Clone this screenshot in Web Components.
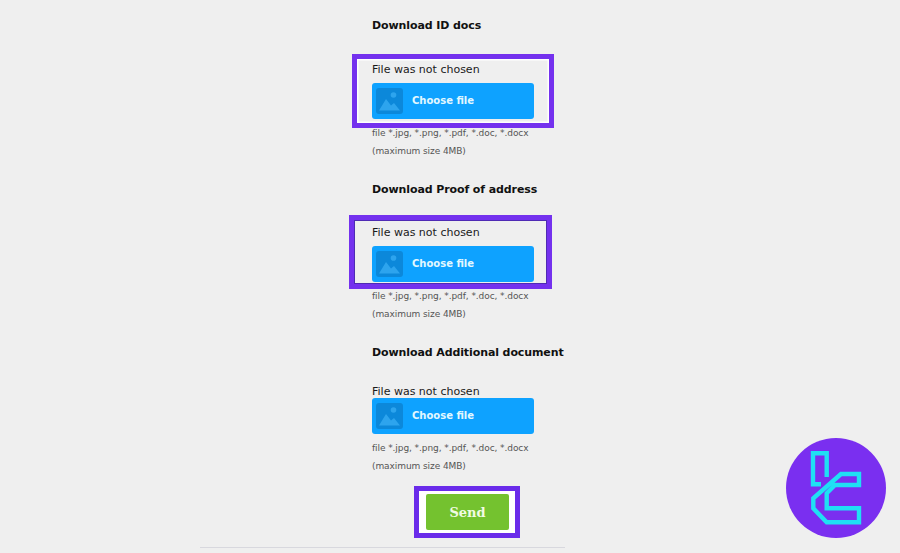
<!DOCTYPE html>
<html>
<head>
<meta charset="utf-8">
<style>
  html, body { margin: 0; height: 100%; background: #efefef; overflow: hidden; }
  body { font-family: "DejaVu Sans", sans-serif; color: #111; }
  #page { box-sizing: border-box; width: 365px; margin-left: 200px; padding: 16px 0 0 172px; }
</style>
</head>
<body>
<div id="page">
  <upload-block heading="Download ID docs" mark="first"></upload-block>
  <upload-block heading="Download Proof of address" mark="second"></upload-block>
  <upload-block heading="Download Additional document" tight></upload-block>
  <send-button>Send</send-button>
</div>
<page-rule></page-rule>
<brand-badge></brand-badge>

<script>
class ChooseFile extends HTMLElement {
  constructor () {
    super();
    this.attachShadow({ mode: 'open' });
    this.shadowRoot.innerHTML = /* html */ `
    <style>
      :host { display: flex; align-items: center; box-sizing: border-box; width: 162px; height: 36px; padding-left: 4px; background: #0ea2ff; border-radius: 3px; }
      .tile { display: block; width: 27px; height: 26px; }
      span { margin: 0 0 2px 9px; font: bold 10px "DejaVu Sans", sans-serif; color: #e2f8ff; }
    </style>
    <svg class="tile" viewBox="0 0 27 26">
      <rect width="27" height="26" rx="3" fill="#0c88da"/>
      <circle cx="17.5" cy="7" r="2.8" fill="#2da4ee"/>
      <path d="M3 22.5 L10 11 L15 17.5 L18 15 L24 22.5 Z" fill="#2da4ee"/>
    </svg>
    <span>Choose file</span>`;
  }
}

class UploadBlock extends HTMLElement {
  constructor () {
    super();
    this.attachShadow({ mode: 'open' });
  }

  static get styles () {
    return /* css */ `
      :host { display: block; position: relative; margin-bottom: 20px; }
      :host([tight]) { margin-bottom: 19px; }
      h3 { margin: 0; padding-top: 1px; font: bold 11px/18px "DejaVu Sans", sans-serif; letter-spacing: -0.1px; color: #111; white-space: nowrap; }
      .label { margin: 28px 0 6px; font: 11px/14px "DejaVu Sans", sans-serif; color: #1a1a1a; }
      :host([mark="second"]) .label { margin-top: 27px; }
      :host([tight]) .label { margin: 23px 0 -1px; }
      .hint { margin-top: 5px; font: 9px/18px "DejaVu Sans", sans-serif; letter-spacing: -0.08px; color: #555; white-space: nowrap; }
      .mark { position: absolute; box-sizing: border-box; border: 5px solid #7431ee; pointer-events: none; }
      :host([mark="first"]) .mark { left: -20px; top: 38px; width: 202px; height: 74px; box-shadow: inset 0 0 0 1.5px #fff; }
      :host([mark="second"]) .mark { left: -23px; top: 35px; width: 203px; height: 74px; box-shadow: inset 0 0 0 1px #4f2bb4; }
    `;
  }

  connectedCallback () {
    const mark = this.hasAttribute('mark') ? '<div class="mark"></div>' : '';
    this.shadowRoot.innerHTML = /* html */ `
    <style>${UploadBlock.styles}</style>
    <h3>${this.getAttribute('heading')}</h3>
    <div class="label">File was not chosen</div>
    <choose-file></choose-file>
    <div class="hint">file *.jpg, *.png, *.pdf, *.doc, *.docx<br>(maximum size 4MB)</div>
    ${mark}`;
  }
}

class SendButton extends HTMLElement {
  constructor () {
    super();
    this.attachShadow({ mode: 'open' });
    this.shadowRoot.innerHTML = /* html */ `
    <style>
      :host { display: block; position: relative; box-sizing: border-box; width: 83px; height: 36px; margin-left: 54px; }
      .mark { position: absolute; left: -12px; top: -8px; width: 106px; height: 52px; box-sizing: border-box; border: 5px solid #6a2bea; background: #fff; }
      .btn { position: relative; display: flex; align-items: center; justify-content: center; height: 100%; background: #74c22f; border-radius: 2px; font: bold 13px "DejaVu Serif", serif; color: #f1fbe4; }
    </style>
    <div class="mark"></div>
    <div class="btn"><slot></slot></div>`;
  }
}

class PageRule extends HTMLElement {
  constructor () {
    super();
    this.attachShadow({ mode: 'open' });
    this.shadowRoot.innerHTML = `<style>:host { display: block; width: 365px; height: 1px; margin: 17px 0 0 200px; background: #d8d8de; }</style>`;
  }
}

class BrandBadge extends HTMLElement {
  constructor () {
    super();
    this.attachShadow({ mode: 'open' });
    this.shadowRoot.innerHTML = /* html */ `
    <style>
      :host { display: block; position: absolute; left: 786px; top: 438px; width: 100px; height: 100px; }
      svg { display: block; }
    </style>
    <svg width="100" height="100" viewBox="0 0 100 100">
      <circle cx="50" cy="50" r="50" fill="#7a2ff0"/>
      <g fill="none" stroke="#1fe0f4" stroke-width="4.4" stroke-linejoin="miter">
        <path d="M40.7 39 V15.3 H27 V46.3 H35"/>
        <path d="M55 36 H73 V47 H49 L40.7 55.3 V70.3 H73 V84.3 H40.7 L27.3 70.3 V60.3 Z"/>
      </g>
    </svg>`;
  }
}

customElements.define('choose-file', ChooseFile);
customElements.define('upload-block', UploadBlock);
customElements.define('send-button', SendButton);
customElements.define('page-rule', PageRule);
customElements.define('brand-badge', BrandBadge);
</script>
</body>
</html>
